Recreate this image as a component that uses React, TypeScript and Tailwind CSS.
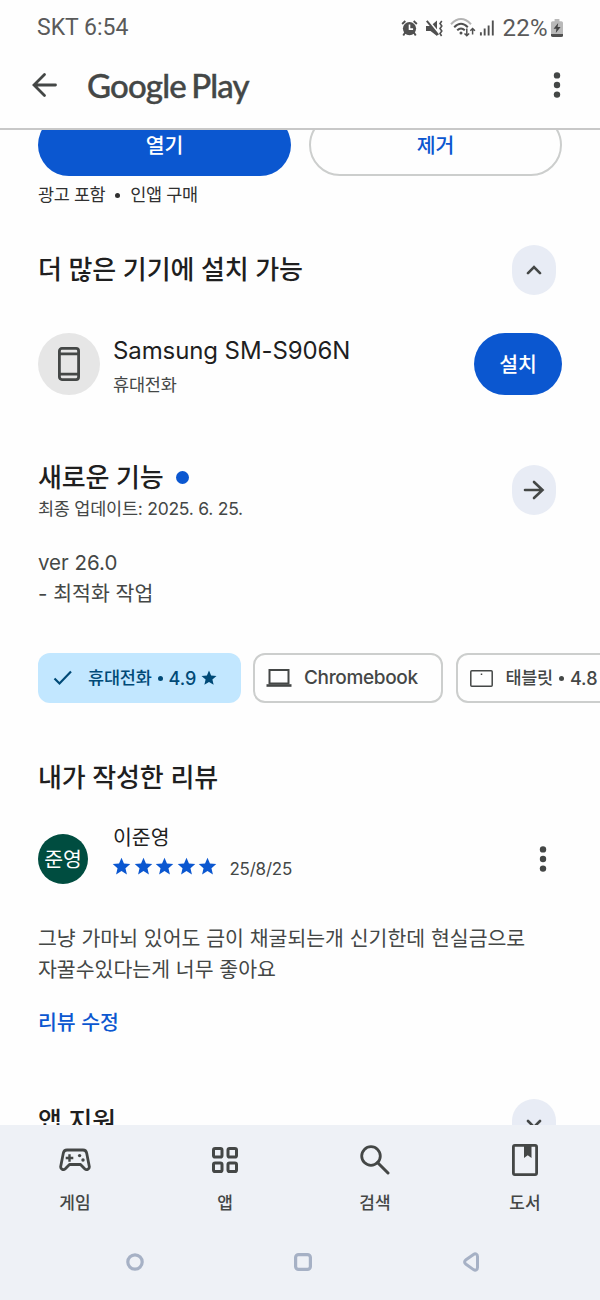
import type { ReactNode } from "react";

const STAR = "M12 17.27L18.18 21l-1.64-7.03L22 9.24l-7.19-.61L12 2 9.19 8.63 2 9.24l5.46 4.73L5.82 21z";

function Star({ className }: { className: string }) {
  return (
    <svg viewBox="0 0 24 24" className={className} fill="currentColor">
      <path d={STAR} />
    </svg>
  );
}

function Dots() {
  return (
    <svg width="8" height="28" viewBox="0 0 8 28" fill="#444746">
      <circle cx="4" cy="4.4" r="3.2" />
      <circle cx="4" cy="14" r="3.2" />
      <circle cx="4" cy="23.6" r="3.2" />
    </svg>
  );
}

function RoundButton({ children }: { children: ReactNode }) {
  return (
    <button className="flex h-[50px] w-11 shrink-0 items-center justify-center rounded-[22px] bg-[#e8ecf5]">
      {children}
    </button>
  );
}

function Line({ d, width, height, stroke = 2.6 }: { d: string; width: number; height: number; stroke?: number }) {
  return (
    <svg
      width={width}
      height={height}
      viewBox={`0 0 ${width} ${height}`}
      fill="none"
      stroke="#444746"
      strokeWidth={stroke}
      strokeLinecap="round"
    >
      <path d={d} />
    </svg>
  );
}

function StatusBar() {
  return (
    <div className="flex h-14 items-center justify-between pr-[37px] pl-[37px] text-[#5a5a5a]">
      <span className="font-['Roboto',sans-serif] text-[23px] leading-7">SKT 6:54</span>
      <div className="flex items-center">
        <svg width="17" height="18" viewBox="0 0 18 18" fill="#505050">
          <circle cx="9" cy="9.6" r="7" />
          <path d="M4.5 13.5L2.4 17M13.5 13.5l2.1 3.5M1.2 4.8L4.6 1.6M16.8 4.8l-3.4-3.2" stroke="#505050" strokeWidth="2" />
          <path d="M9 5.3v4.9h3.8" fill="none" stroke="#fff" strokeWidth="1.7" />
        </svg>
        <svg className="ml-[8px]" width="17" height="17" viewBox="0 0 17 17">
          <path d="M0 6h4.500L11 .500V16L4.500 11H0z" fill="#505050" />
          <path d="M2 .300L13 13.500" stroke="#fefefe" strokeWidth="2.200" />
          <path d="M.800.800l11.400 14" stroke="#505050" strokeWidth="2" />
          <path d="M15.800 1l-1.800 2.500 1.800 2.500L14 8.500l1.800 2.500-1.800 2.500 1.600 2.500" fill="none" stroke="#505050" strokeWidth="1.600" />
        </svg>
        <svg className="ml-[7px]" width="26" height="20" viewBox="0 0 26 20" fill="none" stroke="#505050" strokeWidth="2">
          <path d="M1 6.2Q11-4 21 6.2" stroke="#b4b4b4" />
          <path d="M4.2 9.2Q11 2.4 17.8 9.2M7.2 12.3Q11 8.6 14.8 12.3" />
          <circle cx="11" cy="15" r="1.500" fill="#505050" stroke="none" />
          <path d="M16.8 10.5v7M14.500 15.500l2.300 2.300 2.300-2.300M22.600 16.500v-6M20.300 12.800l2.300-2.300 2.300 2.300" strokeWidth="1.500" />
        </svg>
        <svg className="ml-[3px]" width="17" height="18" viewBox="0 0 18 18" fill="#505050">
          <path d="M1 13.4h2V17H1zM5 9.6h2V17H5zM9.2 6.4h2V17h-2zM13.6 1h2v16h-2z" />
        </svg>
        <span className="ml-[7px] font-['Roboto',sans-serif] text-[24px] leading-7 tracking-[0.3px]">22%</span>
        <svg className="ml-[3px]" width="12" height="18" viewBox="0 0 12 18">
          <path d="M3.6 0h4.8v2.2h2A1.6 1.6 0 0 1 12 3.8v12A1.8 1.8 0 0 1 10.2 18H1.8A1.8 1.8 0 0 1 0 16.200V3.800a1.600 1.600 0 0 1 1.600-1.600h2z" fill="#b9b9b9" />
          <path d="M0 15h12v1.200a1.800 1.800 0 0 1-1.800 1.800H1.800A1.800 1.800 0 0 1 0 16.200z" fill="#505050" />
          <path d="M7.200 4L2.600 9.800h2.800L4.800 14l4.800-6H6.600z" fill="#444" />
        </svg>
      </div>
    </div>
  );
}

function AppBar() {
  return (
    <header className="flex h-[74px] shrink-0 items-start border-b-2 border-[#c8c8c8] pr-[39px] pl-8">
      <div className="flex h-[58px] w-full items-center">
        <Line width={26} height={26} stroke={2.8} d="M23.500 13H2.500M12.500 2.500L2 13l10.500 10.500" />
        <h1 className="ml-[29px] font-['Lato',sans-serif] text-[33px] leading-9 font-medium tracking-[-0.85px] [word-spacing:-2px] text-[#444746] [-webkit-text-stroke:0.4px_#444746]">
          Google Play
        </h1>
        <div className="ml-auto">
          <Dots />
        </div>
      </div>
    </header>
  );
}

const HEADING = "text-[26px] leading-8 font-medium tracking-[-0.15px] whitespace-nowrap text-[#1f1f1f]";

function NavItem({ label, children }: { label: string; children: ReactNode }) {
  return (
    <div className="flex flex-1 flex-col items-center">
      <div className="flex h-[34px] items-center">{children}</div>
      <span className="mt-[14px] text-[17px] leading-6 font-medium text-[#444746]">{label}</span>
    </div>
  );
}

export default function App() {
  return (
    <div className="flex h-[1300px] w-[600px] flex-col overflow-hidden bg-[#fefefe] font-['Inter','Noto_Sans_CJK_KR',sans-serif]">
      <StatusBar />
      <AppBar />

      <main className="h-[995px] shrink-0 overflow-hidden">
        <div className="-mt-4 flex gap-[18px] px-[38px]">
          <button className="h-[62px] w-[253px] rounded-full bg-[#0b57d0] pt-[2px] text-[20.5px] font-medium text-white">열기</button>
          <button className="h-[62px] w-[253px] rounded-full border-2 border-[#cccecd] pt-[2px] text-[20.5px] font-medium text-[#0b57d0]">
            제거
          </button>
        </div>
        <p className="mt-[7px] flex items-center pl-[38px] text-[17.5px] leading-6 tracking-[-0.4px] text-[#303030]">
          광고 포함
          <span className="mx-[10px] size-[5px] rounded-full bg-[#303030]" />
          인앱 구매
        </p>

        <section className="mt-[38px] flex items-center justify-between pr-11 pl-[38px]">
          <h2 className={HEADING}>더 많은 기기에 설치 가능</h2>
          <RoundButton>
            <Line width={16} height={10} d="M2 8.200L8 2.200l6 6" />
          </RoundButton>
        </section>

        <section className="mt-[38px] flex items-center pr-[38px] pl-[38px]">
          <div className="flex size-[62px] items-center justify-center rounded-full bg-[#e6e6e6]">
            <svg width="22" height="34" viewBox="0 0 22 34" fill="none" stroke="#444746" strokeWidth="2.800">
              <rect x="1.400" y="1.400" width="19.200" height="31.200" rx="2.500" />
              <path d="M1 6.800h20M1 27.200h20" />
            </svg>
          </div>
          <div className="mt-px ml-[13px] h-[60px]">
            <p className="text-[24px] leading-8 tracking-[-0.1px] text-[#1f1f1f]">Samsung SM-S906N</p>
            <p className="mt-[6px] text-[17.5px] leading-6 tracking-[-0.2px] text-[#444746]">휴대전화</p>
          </div>
          <button className="ml-auto h-[62px] w-[88px] rounded-full bg-[#0b57d0] pt-[2px] text-[20.5px] font-medium text-white">설치</button>
        </section>

        <section className="mt-[66px] flex items-start justify-between pr-11 pl-[38px]">
          <div className="pt-px">
            <div className="flex items-center gap-[12px]">
              <h2 className={HEADING}>새로운 기능</h2>
              <span className="-mt-px size-[13px] rounded-full bg-[#0b57d0]" />
            </div>
            <p className="mt-[3px] text-[17.5px] leading-6 tracking-[-0.25px] text-[#444746]">최종 업데이트: 2025. 6. 25.</p>
          </div>
          <div className="mt-[4px]">
            <RoundButton>
              <Line width={22} height={20} stroke={2.6} d="M2 10h17M11 2l8.500 8L11 18" />
            </RoundButton>
          </div>
        </section>
        <div className="mt-[26px] pl-[38px] text-[20.5px] leading-[31px] text-[#444746]">
          <p>ver 26.0</p>
          <p>- 최적화 작업</p>
        </div>

        <div className="mt-[44px] flex gap-[12.5px] pl-[38px] text-[18px] font-medium whitespace-nowrap text-[#444746]">
          <div className="flex h-[50px] w-[202.5px] shrink-0 items-center rounded-[12px] bg-[#c2e7ff] pl-[15px] text-[#004a77]">
            <svg width="20" height="16" viewBox="0 0 20 16" fill="none" stroke="currentColor" strokeWidth="2.200">
              <path d="M1.500 8.500l5 5L18 1.500" />
            </svg>
            <span className="ml-[15px] text-[17.5px] tracking-[-0.2px]">휴대전화</span>
            <span className="mx-[6px] size-[5px] rounded-full bg-[#004a77]" />
            <span>4.9</span>
            <Star className="ml-[4px] size-[18px]" />
          </div>
          <div className="flex h-[50px] w-[190px] shrink-0 items-center rounded-[12px] border-2 border-[#cccecd] pl-[11px]">
            <svg width="26" height="20" viewBox="0 0 26 20" fill="none" stroke="#444746" strokeWidth="2">
              <rect x="3.500" y="2" width="19" height="13.500" />
              <path d="M.500 17.500h25" strokeWidth="2.600" />
            </svg>
            <span className="ml-3 text-[19px] tracking-[-0.35px]">Chromebook</span>
          </div>
          <div className="flex h-[50px] w-[190px] shrink-0 items-center rounded-[12px] border-2 border-[#cccecd] pl-[12px]">
            <svg width="23" height="17" viewBox="0 0 23 17" fill="none" stroke="#444746" strokeWidth="1.500">
              <rect x=".800" y=".800" width="21.400" height="15.400" rx="1" />
              <path d="M11.500 3.500v1.500" />
            </svg>
            <span className="ml-[13px] text-[17.5px] tracking-[-0.3px]">태블릿</span>
            <span className="mx-[6px] size-[5px] rounded-full bg-[#444746]" />
            <span>4.8</span>
            <Star className="ml-[4px] size-[18px]" />
          </div>
        </div>

        <h2 className={`mt-[59px] pl-[38px] ${HEADING}`}>내가 작성한 리뷰</h2>

        <section className="mt-[30px] flex items-start pr-[53px] pl-[38px]">
          <div className="mt-[10px] flex size-[50px] items-center justify-center rounded-full bg-[#004d40] pt-[2px] text-[20.5px] leading-none text-white">
            준영
          </div>
          <div className="ml-[25px]">
            <p className="text-[20.5px] leading-7 text-[#1f1f1f]">이준영</p>
            <div className="flex h-8 items-center text-[#0b57d0]">
              <div className="-ml-[2px] flex gap-[0.600px] pb-[4px]">
                {[0, 1, 2, 3, 4].map((i) => (
                  <Star key={i} className="size-[21px]" />
                ))}
              </div>
              <span className="ml-[11px] pt-[3px] text-[17px] tracking-[-0.2px] text-[#444746]">25/8/25</span>
            </div>
          </div>
          <div className="mt-[21px] ml-auto">
            <Dots />
          </div>
        </section>

        <p className="mt-[39px] pl-[38px] text-[20.5px] leading-[31px] whitespace-nowrap text-[#444746]">
          그냥 가마뇌 있어도 금이 채굴되는개 신기한데 현실금으로
          <br />
          자꿀수있다는게 너무 좋아요
        </p>
        <a className="mt-[24px] block pl-[38px] text-[20.5px] leading-7 font-medium text-[#0b57d0]">리뷰 수정</a>

        <section className="mt-[62px] flex items-start justify-between pr-11 pl-[38px]">
          <h2 className={`mt-[7px] ${HEADING}`}>앱 지원</h2>
          <RoundButton>
            <Line width={16} height={10} d="M2 2l6 6 6-6" />
          </RoundButton>
        </section>
      </main>

      <footer className="flex flex-1 flex-col bg-[#eef1f6]">
        <nav className="flex pt-[18px]">
          <NavItem label="게임">
            <svg width="32" height="24" viewBox="0 0 32 24" fill="none" stroke="#444746" strokeWidth="2.800" strokeLinejoin="round">
              <path d="M8 2h16c2 0 3.300 1.200 3.700 3.200l2.600 13.300c.400 2.400-2.600 4.200-4.600 2.300L21.500 16.500h-11L6.300 20.800c-2 1.900-5 .100-4.600-2.300L4.300 5.200C4.700 3.200 6 2 8 2z" />
              <path d="M10.500 6.200v7.600M6.700 10h7.600" strokeWidth="2.400" />
              <circle cx="20.600" cy="7.600" r="1.700" fill="#444746" stroke="none" />
              <circle cx="24" cy="12" r="1.700" fill="#444746" stroke="none" />
            </svg>
          </NavItem>
          <NavItem label="앱">
            <svg width="26" height="26" viewBox="0 0 26 26" fill="none" stroke="#444746" strokeWidth="3">
              <rect x="1.500" y="1.500" width="8.500" height="8.500" rx="1.600" />
              <rect x="16" y="1.500" width="8.500" height="8.500" rx="1.600" />
              <rect x="1.500" y="16" width="8.500" height="8.500" rx="1.600" />
              <rect x="16" y="16" width="8.500" height="8.500" rx="1.600" />
            </svg>
          </NavItem>
          <NavItem label="검색">
            <svg width="30" height="30" viewBox="0 0 30 30" fill="none" stroke="#444746" strokeWidth="2.800" strokeLinecap="round">
              <circle cx="11" cy="11" r="9.300" />
              <path d="M17.500 17.500L28 28" strokeWidth="3" />
            </svg>
          </NavItem>
          <NavItem label="도서">
            <svg width="26" height="32" viewBox="0 0 26 32" fill="none" stroke="#444746" strokeWidth="2.800">
              <rect x="1.400" y="1.400" width="23.200" height="29.200" rx="1.500" />
              <path d="M12 2h7.500v12l-3.750-2.800L12 14z" fill="#444746" stroke="none" />
            </svg>
          </NavItem>
        </nav>
        <div className="mt-[37px] flex items-center pl-[126px]">
          <svg width="18" height="18" viewBox="0 0 18 18" fill="none" stroke="#a6b1c5" strokeWidth="3.200">
            <circle cx="9" cy="9" r="7.200" />
          </svg>
          <svg className="ml-[150px]" width="18" height="18" viewBox="0 0 18 18" fill="none" stroke="#a6b1c5" strokeWidth="3.200">
            <rect x="1.600" y="1.600" width="14.800" height="14.800" rx="3" />
          </svg>
          <svg className="ml-[151px]" width="17" height="20" viewBox="0 0 17 20" fill="none" stroke="#a6b1c5" strokeWidth="3" strokeLinejoin="round">
            <path d="M3 7.700L10.500 2.400c2-1.300 4-.300 4 2v11.200c0 2.300-2 3.300-4 2L3 12.300C1.100 10.800 1.100 9.200 3 7.700z" />
          </svg>
        </div>
      </footer>
    </div>
  );
}
